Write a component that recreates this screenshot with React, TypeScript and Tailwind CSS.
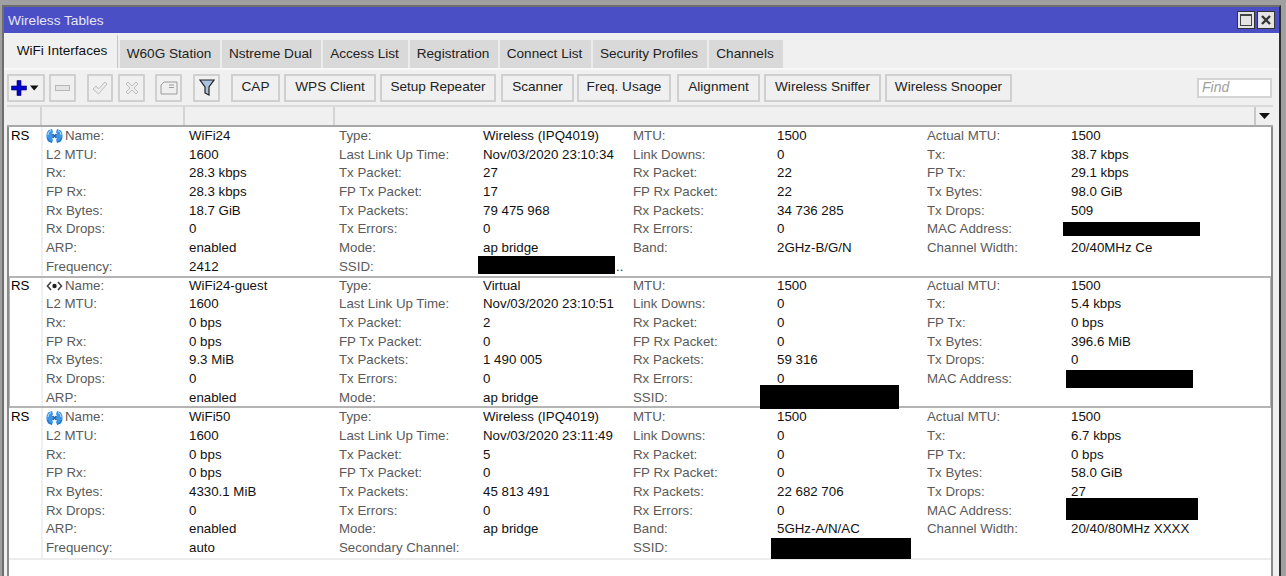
const tabs: [string, string][] = [
  ['W60G Station', 'w-[102px]'],
  ['Nstreme Dual', 'w-[101px]'],
  ['Access List', 'w-[87px]'],
  ['Registration', 'w-[90px]'],
  ['Connect List', 'w-[93px]'],
  ['Security Profiles', 'w-[116px]'],
  ['Channels', 'w-[76px]'],
];

const toolButtons: [string, string, string][] = [
  ['CAP', 'w-[49px]', 'ml-[11px]'],
  ['WPS Client', 'w-[92px]', 'ml-[4px]'],
  ['Setup Repeater', 'w-[116px]', 'ml-[4px]'],
  ['Scanner', 'w-[73px]', 'ml-[5px]'],
  ['Freq. Usage', 'w-[94px]', 'ml-[3px]'],
  ['Alignment', 'w-[83px]', 'ml-[6px]'],
  ['Wireless Sniffer', 'w-[117px]', 'ml-[4px]'],
  ['Wireless Snooper', 'w-[127px]', 'ml-[4px]'],
];

type Line = (string | null)[];

const row1: Line[] = [
  ['Name:', 'WiFi24', 'Type:', 'Wireless (IPQ4019)', 'MTU:', '1500', 'Actual MTU:', '1500'],
  ['L2 MTU:', '1600', 'Last Link Up Time:', 'Nov/03/2020 23:10:34', 'Link Downs:', '0', 'Tx:', '38.7 kbps'],
  ['Rx:', '28.3 kbps', 'Tx Packet:', '27', 'Rx Packet:', '22', 'FP Tx:', '29.1 kbps'],
  ['FP Rx:', '28.3 kbps', 'FP Tx Packet:', '17', 'FP Rx Packet:', '22', 'Tx Bytes:', '98.0 GiB'],
  ['Rx Bytes:', '18.7 GiB', 'Tx Packets:', '79 475 968', 'Rx Packets:', '34 736 285', 'Tx Drops:', '509'],
  ['Rx Drops:', '0', 'Tx Errors:', '0', 'Rx Errors:', '0', 'MAC Address:', ''],
  ['ARP:', 'enabled', 'Mode:', 'ap bridge', 'Band:', '2GHz-B/G/N', 'Channel Width:', '20/40MHz Ce'],
  ['Frequency:', '2412', 'SSID:', '', null, null, null, null],
];

const row2: Line[] = [
  ['Name:', 'WiFi24-guest', 'Type:', 'Virtual', 'MTU:', '1500', 'Actual MTU:', '1500'],
  ['L2 MTU:', '1600', 'Last Link Up Time:', 'Nov/03/2020 23:10:51', 'Link Downs:', '0', 'Tx:', '5.4 kbps'],
  ['Rx:', '0 bps', 'Tx Packet:', '2', 'Rx Packet:', '0', 'FP Tx:', '0 bps'],
  ['FP Rx:', '0 bps', 'FP Tx Packet:', '0', 'FP Rx Packet:', '0', 'Tx Bytes:', '396.6 MiB'],
  ['Rx Bytes:', '9.3 MiB', 'Tx Packets:', '1 490 005', 'Rx Packets:', '59 316', 'Tx Drops:', '0'],
  ['Rx Drops:', '0', 'Tx Errors:', '0', 'Rx Errors:', '0', 'MAC Address:', ''],
  ['ARP:', 'enabled', 'Mode:', 'ap bridge', 'SSID:', '', null, null],
];

const row3: Line[] = [
  ['Name:', 'WiFi50', 'Type:', 'Wireless (IPQ4019)', 'MTU:', '1500', 'Actual MTU:', '1500'],
  ['L2 MTU:', '1600', 'Last Link Up Time:', 'Nov/03/2020 23:11:49', 'Link Downs:', '0', 'Tx:', '6.7 kbps'],
  ['Rx:', '0 bps', 'Tx Packet:', '5', 'Rx Packet:', '0', 'FP Tx:', '0 bps'],
  ['FP Rx:', '0 bps', 'FP Tx Packet:', '0', 'FP Rx Packet:', '0', 'Tx Bytes:', '58.0 GiB'],
  ['Rx Bytes:', '4330.1 MiB', 'Tx Packets:', '45 813 491', 'Rx Packets:', '22 682 706', 'Tx Drops:', '27'],
  ['Rx Drops:', '0', 'Tx Errors:', '0', 'Rx Errors:', '0', 'MAC Address:', ''],
  ['ARP:', 'enabled', 'Mode:', 'ap bridge', 'Band:', '5GHz-A/N/AC', 'Channel Width:', '20/40/80MHz XXXX'],
  ['Frequency:', 'auto', 'Secondary Channel:', '', 'SSID:', '', null, null],
];

const WirelessIcon = () => (
  <svg width="17" height="16" viewBox="0 0 17 16" className="shrink-0">
    <path d="M6 1 L2 2.5 L0.5 6 L0.5 10 L2 13.5 L6 15 L7 12 L6 10 L7.5 8 L6 6 L7 4 Z" fill="#3a96e8" />
    <path d="M11 1 L15 2.5 L16.5 6 L16.5 10 L15 13.5 L11 15 L10 12 L11 10 L9.5 8 L11 6 L10 4 Z" fill="#3a96e8" />
    <path d="M6.5 6 L10.5 10 M10.5 6 L6.5 10" stroke="#1d5f9f" strokeWidth="1.5" />
    <path d="M5 2.5 L2.5 4.5 L2 7 M12 2.5 L14.5 4.5 L15 7" fill="none" stroke="#c4e3fb" strokeWidth="1" />
    <path d="M1.5 10 L3 13 L6 14.3 M15.5 10 L14 13 L11 14.3" fill="none" stroke="#1c6db8" strokeWidth="1" />
  </svg>
);

const VirtualIcon = () => (
  <svg width="17" height="16" viewBox="0 0 17 16" className="shrink-0">
    <path d="M5 4 L1.5 8 L5 12" fill="none" stroke="#444" strokeWidth="1.6" />
    <path d="M12 4 L15.5 8 L12 12" fill="none" stroke="#444" strokeWidth="1.6" />
    <circle cx="8.5" cy="8" r="2.2" fill="#222" />
  </svg>
);

const ToolIcon = ({ className, children }: { className: string; children: React.ReactNode }) => (
  <div className={`h-[28px] flex items-center justify-center rounded-[1px] border-2 border-[#d0d0d0] bg-[#f0f0f0] ${className}`}>
    {children}
  </div>
);

const InfoRows = ({ lines, icon, selected, className, children }: { lines: Line[]; icon: React.ReactNode; selected?: boolean; className?: string; children?: React.ReactNode }) => (
  <div className={`relative flex ${selected ? 'outline-2 -outline-offset-1 outline-[#b4b4b4] z-10' : ''} ${className ?? ''}`}>
    <div className="w-[34px] shrink-0 border-r-2 border-[#f0f0f0] pl-[2px] text-black leading-[18.7px]">RS</div>
    <div className="pl-[3px]">
      {lines.map((line, i) => (
        <div key={i} className="grid h-[18.7px] grid-cols-[143px_150px_144px_150px_144px_150px_144px_200px] leading-[18.7px]">
          {line.map((text, j) =>
            j === 0 && i === 0 ? (
              <div key={j} className="flex items-center text-[#5a5a5a]">
                {icon}
                <span className="ml-[2px]">{text}</span>
              </div>
            ) : (
              <div key={j} className={`whitespace-nowrap ${j % 2 === 0 ? 'text-[#5a5a5a]' : 'text-[#111]'}`}>
                {text}
              </div>
            ),
          )}
        </div>
      ))}
    </div>
    {children}
  </div>
);

export default function App() {
  return (
    <div className="h-[576px] w-[1286px] overflow-hidden bg-[#a0a0a0] pt-[5px] pl-[2px] pr-[5px] text-[13.3px] font-['Liberation_Sans',Arial,sans-serif]">
      <div className="flex h-full flex-col border-l-2 border-t-2 border-r-2 border-l-[#6e6e6e] border-t-[#6e6e6e] border-r-[#2e2e2e] bg-[#f0f0f0]">
        {/* title bar */}
        <div className="flex h-[26px] shrink-0 items-center justify-between bg-[#4b4fc6] pr-[4px] pl-[4px] text-[13.7px] text-[#e6e6f5]">
          <span className="pt-[3px]">Wireless Tables</span>
          <div className="flex gap-[2px]">
            <div className="flex h-[18px] w-[18px] items-center justify-center border border-[#333] bg-[#e4e4e4]">
              <div className="h-[12px] w-[12px] border border-t-2 border-[#444]"></div>
            </div>
            <div className="flex h-[18px] w-[18px] items-center justify-center border border-[#333] bg-[#e4e4e4]">
              <svg width="10" height="10" viewBox="0 0 10 10">
                <path d="M1 1 L9 9 M9 1 L1 9" stroke="#333" strokeWidth="2.4" />
              </svg>
            </div>
          </div>
        </div>

        {/* tabs */}
        <div className="flex h-[35px] shrink-0 items-end pl-[2px] text-[13.6px]">
          <div className="flex h-[33px] w-[112px] items-center justify-center rounded-t-[1px] border-r border-[#c4c4c4] bg-[#f0f0f0] pb-[1px] pl-[1px] text-[#111]">
            WiFi Interfaces
          </div>
          {tabs.map(([name, width]) => (
            <div key={name} className={`flex h-[28px] items-center justify-center border-l-2 border-[#ececec] bg-[#d9d9d9] pr-[2px] text-[#222] ${width}`}>
              {name}
            </div>
          ))}
        </div>

        {/* toolbar */}
        <div className="relative flex h-[37px] shrink-0 items-center border-t-2 border-[#f8f8f8] pl-[3px] text-[13.6px] text-[#222]">
          <ToolIcon className="w-[38px] border-[#c8c8c8]">
            <svg width="30" height="18" viewBox="0 0 30 18">
              <path d="M6 1.5 H10 V7 H15.5 V11 H10 V16.5 H6 V11 H0.5 V7 H6 Z" fill="#0000d0" stroke="#00006a" strokeWidth="0.6" />
              <path d="M19 6.5 H27.5 L23.2 11.5 Z" fill="#111" />
            </svg>
          </ToolIcon>
          <ToolIcon className="ml-[4px] w-[27px]">
            <div className="h-[6px] w-[15px] border border-[#b8b8b8] bg-[#e4e4e4]"></div>
          </ToolIcon>
          <ToolIcon className="ml-[11px] w-[26px]">
            <svg width="16" height="14" viewBox="0 0 16 14">
              <path d="M1 8 L4 5 L6.5 8 L13 1 L15 3 L6.5 13 Z" fill="#ececec" stroke="#bdbdbd" />
            </svg>
          </ToolIcon>
          <ToolIcon className="ml-[5px] w-[27px]">
            <svg width="16" height="16" viewBox="0 0 16 16">
              <path d="M2 4 L4 2 L8 6 L12 2 L14 4 L10 8 L14 12 L12 14 L8 10 L4 14 L2 12 L6 8 Z" fill="#ececec" stroke="#bdbdbd" />
            </svg>
          </ToolIcon>
          <ToolIcon className="ml-[10px] w-[27px]">
            <svg width="18" height="14" viewBox="0 0 18 14">
              <path d="M1 13 V4 L4 1 H17 V13 Z" fill="#efefef" stroke="#9a9a9a" />
              <path d="M9 4 H14 M9 6.5 H14" stroke="#9a9a9a" />
            </svg>
          </ToolIcon>
          <ToolIcon className="ml-[11px] w-[27px] border-[#c0c0c0]">
            <svg width="16" height="18" viewBox="0 0 16 18">
              <path d="M1 1 H15 L10 8 V16 L6 14 V8 Z" fill="#a9c4de" stroke="#222" strokeWidth="1.2" />
            </svg>
          </ToolIcon>
          {toolButtons.map(([label, width, margin]) => (
            <div key={label} className={`flex h-[28px] items-center justify-center border-2 border-[#d0d0d0] bg-[#f0f0f0] ${width} ${margin}`}>
              {label}
            </div>
          ))}
          <div className="mr-[7px] ml-auto flex h-[20px] w-[75px] items-center border-2 border-[#d4d4d4] bg-white pl-[3px] text-[14px] text-[#a0a0a0] italic">
            Find
          </div>
        </div>

        {/* table */}
        <div className="mr-[6px] ml-[3px] flex min-h-0 flex-1 flex-col">
          <div className="flex h-[22px] shrink-0 border-t-2 border-b-2 border-t-[#dadada] border-b-[#a8a8a8] bg-[#f0f0f0]">
            <div className="w-[35px] border-r-2 border-[#d4d4d4]"></div>
            <div className="w-[143px] border-r-2 border-[#d4d4d4]"></div>
            <div className="w-[150px] border-r-2 border-[#d4d4d4]"></div>
            <div className="flex-1"></div>
            <div className="flex w-[19px] items-center justify-center border-l-2 border-[#c8c8c8]">
              <svg width="11" height="6" viewBox="0 0 11 6"><path d="M0 0 H11 L5.5 6 Z" fill="#111" /></svg>
            </div>
          </div>
          <div className="flex-1 overflow-hidden border-x-2 border-x-[#8a8a8a] bg-white">
            <div className="border-b-2 border-[#ececec]">
              <InfoRows lines={row1} icon={<WirelessIcon />}>
                <div className="absolute top-[95px] left-[1054px] h-[14px] w-[137px] bg-black"></div>
                <div className="absolute top-[129px] left-[469px] h-[18px] w-[137px] bg-black"></div>
                <div className="absolute top-[130px] left-[607px] text-[#333]">..</div>
              </InfoRows>
              <InfoRows lines={row2} icon={<VirtualIcon />} selected>
                <div className="absolute top-[93px] left-[1057px] h-[18px] w-[127px] bg-black"></div>
                <div className="absolute top-[108px] left-[751px] h-[24px] w-[139px] bg-black"></div>
              </InfoRows>
              <InfoRows lines={row3} icon={<WirelessIcon />} className="pt-[1px]">
                <div className="absolute top-[91px] left-[1057px] h-[22px] w-[132px] bg-black"></div>
                <div className="absolute top-[131px] left-[762px] h-[21px] w-[140px] bg-black"></div>
              </InfoRows>
            </div>
          </div>
        </div>
      </div>
    </div>
  );
}
